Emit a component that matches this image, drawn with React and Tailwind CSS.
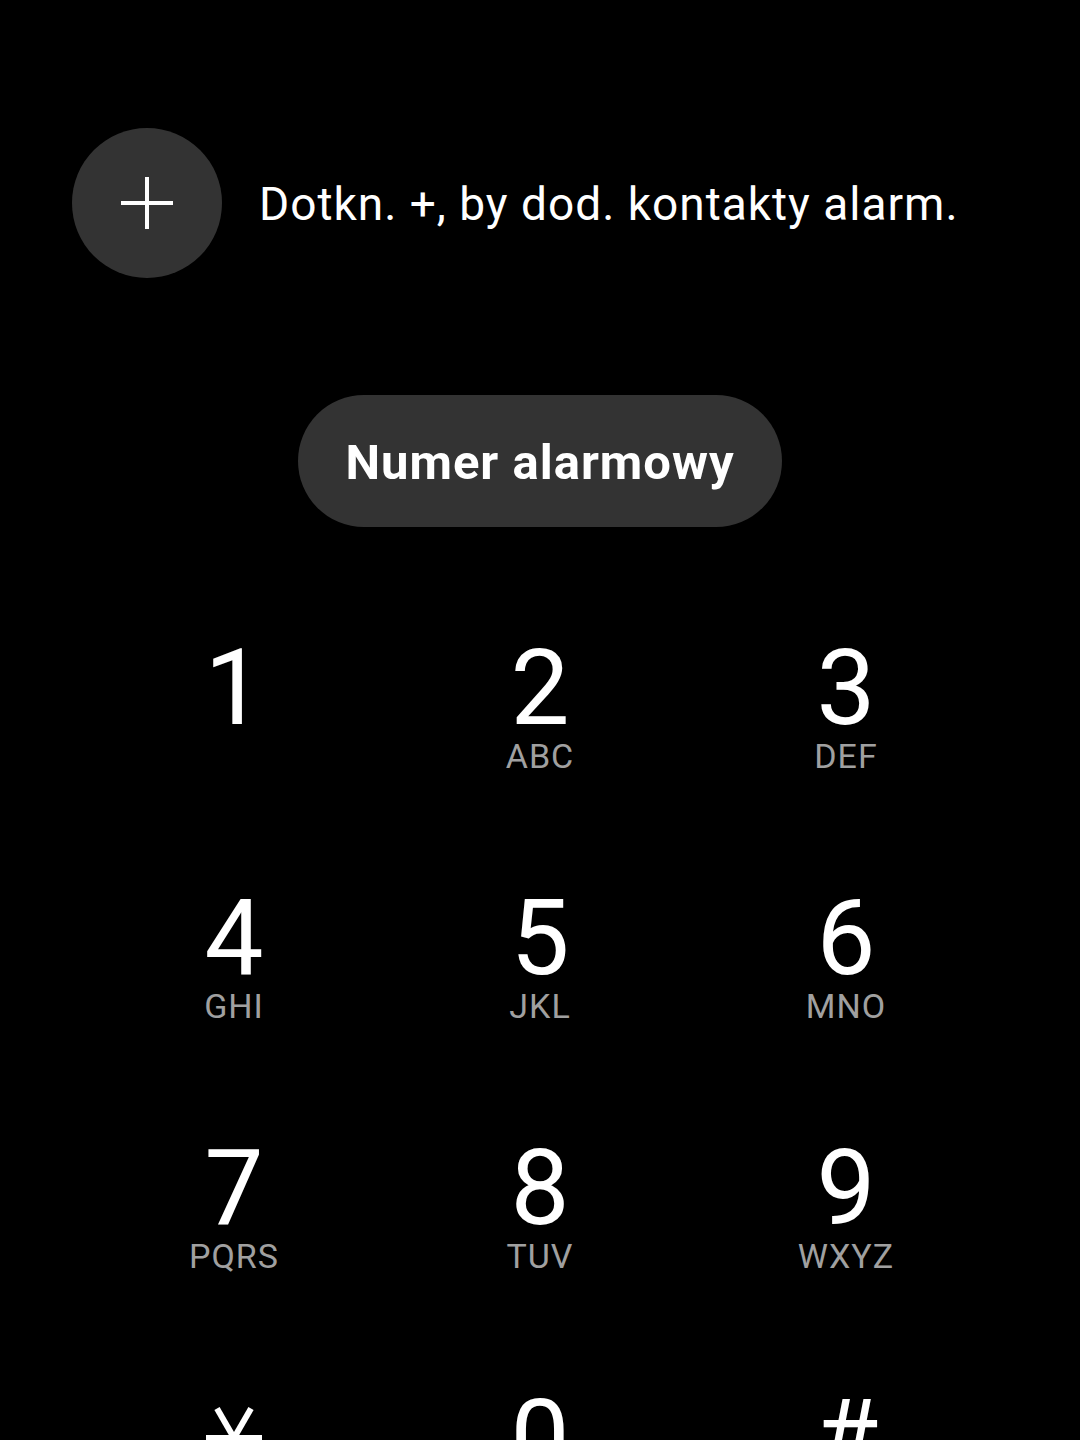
const keys = [
  { d: '1', l: '' },
  { d: '2', l: 'ABC' },
  { d: '3', l: 'DEF' },
  { d: '4', l: 'GHI' },
  { d: '5', l: 'JKL' },
  { d: '6', l: 'MNO' },
  { d: '7', l: 'PQRS' },
  { d: '8', l: 'TUV' },
  { d: '9', l: 'WXYZ' },
  { d: '*', l: '' },
  { d: '0', l: '' },
  { d: '#', l: '' },
];

// six-arm asterisk, horizontal arm like the Samsung dialer
const Star = () => (
  <svg width="64" height="64" viewBox="0 0 64 64" className="mt-[20px]">
    <g stroke="white" strokeWidth="6">
      <line x1="4" y1="32" x2="60" y2="32" />
      <line x1="15" y1="2.6" x2="49" y2="61.4" />
      <line x1="49" y1="2.6" x2="15" y2="61.4" />
    </g>
  </svg>
);

export default function App() {
  return (
    <div className="w-[1080px] h-[1440px] overflow-hidden bg-black text-white font-['Roboto',sans-serif]">
      <div className="flex items-center pl-[72px] pt-[128px]">
        <button
          type="button"
          className="w-[150px] h-[150px] rounded-full bg-[#333333] flex items-center justify-center shrink-0"
          aria-label="Dodaj kontakt"
        >
          <svg width="54" height="54" viewBox="0 0 54 54">
            <path d="M27 1v52M1 27h52" stroke="white" strokeWidth="4" />
          </svg>
        </button>
        <p className="ml-[37px] mt-[2px] text-[46px] text-white tracking-[1px]">
          Dotkn. +, by dod. kontakty alarm.
        </p>
      </div>

      <div className="flex justify-center mt-[117px]">
        <button
          type="button"
          className="w-[484px] h-[132px] rounded-full bg-[#333333] text-[49px] font-bold text-white tracking-[1px] pt-[4px]"
        >
          Numer alarmowy
        </button>
      </div>

      <div className="grid grid-cols-3 w-[918px] mx-auto mt-[109px]">
        {keys.map((k) => (
          <div key={k.d} className="h-[250px] flex flex-col items-center">
            {k.d === '*' ? (
              <Star />
            ) : (
              <span className="text-[105px] leading-none font-normal">{k.d}</span>
            )}
            {k.l && (
              <span className="-mt-[2px] text-[34px] leading-none text-[#a0a0a0] tracking-[1px]">{k.l}</span>
            )}
          </div>
        ))}
      </div>
    </div>
  );
}
